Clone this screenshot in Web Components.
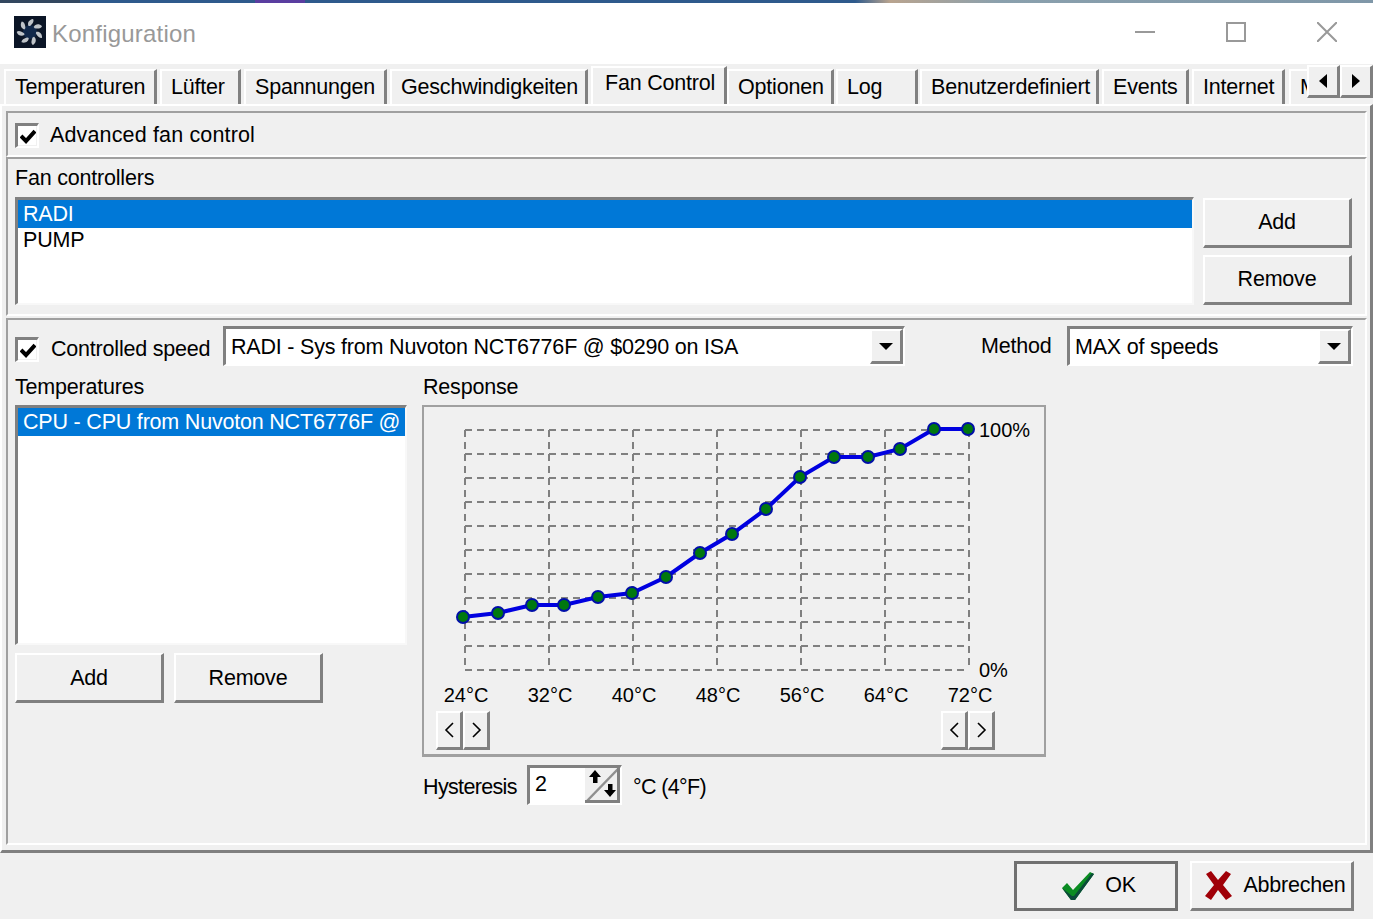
<!DOCTYPE html>
<html lang="de">
<head>
<meta charset="utf-8">
<title>Konfiguration</title>
<style>
  html, body { margin: 0; height: 100%; overflow: hidden; background: #f0f0f0; }
  body { font: 21.5px "Liberation Sans", Arial, sans-serif; letter-spacing: -.2px; color: #000; }
</style>
</head>
<body>
<app-window>
  <title-bar slot="title">Konfiguration</title-bar>
  <tab-strip slot="tabs"></tab-strip>
  <tab-sheet slot="sheet">
    <group-panel style="height:46px; --pad:10px 0 0 7px">
      <win-check style="letter-spacing:.15px">Advanced fan control</win-check>
    </group-panel>
    <group-panel style="height:159px; --pad:5px 0 0 7px">
      <fan-controllers></fan-controllers>
    </group-panel>
    <group-panel style="height:527px; margin-top:2px; --pad:6px 0 0 7px">
      <speed-config></speed-config>
    </group-panel>
  </tab-sheet>
  <dialog-footer slot="footer"></dialog-footer>
</app-window>

<script>
const BASE = `
  :host { box-sizing: border-box; }
  * { box-sizing: border-box; }
`;

class AppWindow extends HTMLElement {
  constructor() {
    super();
    this.attachShadow({ mode: "open" }).innerHTML = `
      <style>
        ${BASE}
        :host { display: flex; flex-direction: column; width: 1373px; height: 919px; background: #f0f0f0; }
        .desktop {
          height: 3px; flex: none;
          background: linear-gradient(90deg, #33475f 0, #33475f 80px, #2e5a8c 80px, #2e5a8c 255px, #5a3ea0 255px, #5a3ea0 305px, #2e5a8c 305px, #2e5a8c 855px, #b9a48f 890px, #8aa0ad 1000px, #7f97a8 1373px);
        }
      </style>
      <div class="desktop"></div>
      <slot name="title"></slot>
      <slot name="tabs"></slot>
      <slot name="sheet"></slot>
      <slot name="footer"></slot>
    `;
  }
}

class TitleBar extends HTMLElement {
  constructor() {
    super();
    const blades = [0, 51, 103, 154, 206, 257, 309].map(a =>
      `<path transform="rotate(${a} 16 16)" d="M14.5 10 C13 7 15 3.5 19 3 C20.5 5 18.5 8 16 10 Z" fill="#bfc4c9"/>`).join("");
    this.attachShadow({ mode: "open" }).innerHTML = `
      <style>
        ${BASE}
        :host { display: flex; align-items: center; flex: none; height: 61px; background: #fff; padding: 0 0 4px 14px; }
        .icon { width: 32px; height: 32px; flex: none; }
        .text { margin-left: 6px; color: #999; font-size: 24px; letter-spacing: .2px; padding-top: 5px; }
        .controls { margin-left: auto; display: flex; align-items: center; padding-right: 36px; }
        .controls svg { display: block; width: 20px; height: 20px; fill: none; stroke: #999; stroke-width: 2; }
        .controls svg + svg { margin-left: 71px; }
      </style>
      <svg class="icon" viewBox="0 0 32 32"><rect width="32" height="32" fill="#0b1526"/><circle cx="16" cy="16" r="7" fill="#11284a"/>${blades}</svg>
      <span class="text"><slot></slot></span>
      <div class="controls">
        <svg viewBox="0 0 20 20"><path d="M0 10H20"/></svg>
        <svg viewBox="0 0 20 20"><rect x="1" y="1" width="18" height="18"/></svg>
        <svg viewBox="0 0 20 20"><path d="M0 0L20 20M20 0L0 20"/></svg>
      </div>
    `;
  }
}

class TabStrip extends HTMLElement {
  constructor() {
    super();
    const tabs = [
      ["Temperaturen", 153, 4], ["Lüfter", 81, 3], ["Spannungen", 143, 3],
      ["Geschwindigkeiten", 198, 3], ["Fan Control", 136, 3, true], ["Optionen", 107, 0],
      ["Log", 82, 2], ["Benutzerdefiniert", 179, 2], ["Events", 87, 3],
      ["Internet", 93, 3], ["Mail", 90, 4]
    ];
    const html = tabs.map(([name, w, gap, active]) =>
      `<div class="tab${active ? " active" : ""}" style="width:${w}px;margin-left:${gap}px">${name}</div>`).join("");
    this.attachShadow({ mode: "open" }).innerHTML = `
      <style>
        ${BASE}
        :host { display: block; position: relative; flex: none; height: 40px; overflow: hidden; background: #f0f0f0; }
        .row { display: flex; align-items: flex-start; padding-top: 5px; width: 1500px; }
        .tab {
          flex: none; height: 35px; padding: 0 0 2px 9px; line-height: 32px; white-space: nowrap; overflow: hidden;
          border-right: 3px solid #808080; border-top: 2px solid #fff; border-left: 2px solid #fff;
        }
        .tab.active { height: 40px; margin-top: -3px; padding-left: 12px; line-height: 31px; background: #f0f0f0; }
        .nav { position: absolute; top: 1px; left: 1307px; display: flex; background: #f0f0f0; }
        .nav div {
          width: 33px; height: 33px; display: flex; align-items: center; justify-content: center;
          border: 2px solid #fff; border-right: 3px solid #808080; border-bottom: 3px solid #808080; background: #f0f0f0;
        }
        .nav svg { width: 10px; height: 14px; }
      </style>
      <div class="row">${html}</div>
      <div class="nav">
        <div><svg viewBox="0 0 10 14"><path d="M9 0V14L1 7Z"/></svg></div>
        <div><svg viewBox="0 0 10 14"><path d="M1 0V14L9 7Z"/></svg></div>
      </div>
    `;
  }
}

class TabSheet extends HTMLElement {
  constructor() {
    super();
    this.attachShadow({ mode: "open" }).innerHTML = `
      <style>
        ${BASE}
        :host {
          display: flex; flex-direction: column; flex: none; height: 749px; padding: 5px 3px 0 4px;
          border-top: 2px solid #fff; border-left: 2px solid #fff;
          border-right: 3px solid #808080; border-bottom: 3px solid #808080;
        }
      </style>
      <slot></slot>
    `;
  }
}

class GroupPanel extends HTMLElement {
  constructor() {
    super();
    this.attachShadow({ mode: "open" }).innerHTML = `
      <style>
        ${BASE}
        :host {
          display: block; flex: none; padding: var(--pad, 0);
          border-top: 2px solid #a0a0a0; border-left: 2px solid #a0a0a0;
          border-right: 2px solid #fff; border-bottom: 2px solid #fff;
        }
      </style>
      <slot></slot>
    `;
  }
}

class WinCheck extends HTMLElement {
  constructor() {
    super();
    this.attachShadow({ mode: "open" }).innerHTML = `
      <style>
        ${BASE}
        :host { display: flex; align-items: center; gap: var(--gap, 11px); height: 25px; white-space: nowrap; }
        .box {
          width: 24px; height: 25px; flex: none; background: #fff; display: flex; align-items: center; justify-content: center;
          border: 3px solid #808080; border-right: 2px solid #fff; border-bottom: 2px solid #fff;
          box-shadow: inset -1px -1px 0 #f0f0f0;
        }
        svg { width: 16px; height: 15px; }
      </style>
      <div class="box"><svg viewBox="0 0 16 15"><path d="M1 7L6 12L15 2" fill="none" stroke="#000" stroke-width="4"/></svg></div>
      <span><slot></slot></span>
    `;
  }
}

class WinButton extends HTMLElement {
  constructor() {
    super();
    this.attachShadow({ mode: "open" }).innerHTML = `
      <style>
        ${BASE}
        :host {
          display: flex; align-items: center; justify-content: center; flex: none;
          width: var(--w, 149px); height: var(--h, 50px); background: #f0f0f0; white-space: nowrap;
          border: 2px solid #fff; border-right: 3px solid #808080; border-bottom: 3px solid #808080;
        }
      </style>
      <slot></slot>
    `;
  }
}

class WinList extends HTMLElement {
  constructor() {
    super();
    const items = (this.getAttribute("items") || "").split("|");
    const html = items.map((t, i) => `<div class="row${i === 0 ? " sel" : ""}">${t}</div>`).join("");
    this.attachShadow({ mode: "open" }).innerHTML = `
      <style>
        ${BASE}
        :host {
          display: block; background: #fff; overflow: hidden;
          border: 3px solid #808080; border-right: 2px solid #f8f8f8; border-bottom: 2px solid #f8f8f8;
        }
        .row { height: 26px; line-height: 25px; padding-left: 5px; white-space: nowrap; overflow: hidden; }
        .sel { height: 28px; background: #0078d7; color: #fff; line-height: 28px; }
      </style>
      ${html}
    `;
  }
}

class WinCombo extends HTMLElement {
  constructor() {
    super();
    this.attachShadow({ mode: "open" }).innerHTML = `
      <style>
        ${BASE}
        :host {
          display: flex; align-items: center; height: 40px; background: #fff; padding-left: 5px; white-space: nowrap; overflow: hidden;
          border: 3px solid #808080; border-right: 2px solid #fff; border-bottom: 2px solid #fff;
        }
        .text { flex: 1; padding-top: 2px; overflow: hidden; }
        .drop {
          width: 33px; height: 35px; flex: none; display: flex; align-items: center; justify-content: center; background: #f0f0f0;
          border: 2px solid #fff; border-right: 3px solid #808080; border-bottom: 3px solid #808080;
        }
        svg { width: 14px; height: 7px; }
      </style>
      <span class="text"><slot></slot></span>
      <div class="drop"><svg viewBox="0 0 14 7"><path d="M0 0H14L7 7Z"/></svg></div>
    `;
  }
}

class FanControllers extends HTMLElement {
  constructor() {
    super();
    this.attachShadow({ mode: "open" }).innerHTML = `
      <style>
        ${BASE}
        :host { display: block; }
        .label { height: 33px; line-height: 28px; }
        .body { display: flex; gap: 9px; }
        win-list { width: 1179px; height: 108px; }
        .btns { display: flex; flex-direction: column; gap: 7px; padding-top: 1px; }
      </style>
      <div class="label">Fan controllers</div>
      <div class="body">
        <win-list items="RADI|PUMP"></win-list>
        <div class="btns"><win-button>Add</win-button><win-button>Remove</win-button></div>
      </div>
    `;
  }
}

class FanChart extends HTMLElement {
  constructor() {
    super();
    const pts = [[463,617],[498,613],[532,605],[564,605],[598,597],[632,593],[666,577],[700,553],[732,534],[766,509],[800,477],[834,457],[868,457],[900,449],[934,429],[968,429]];
    let grid = "";
    for (let y = 430; y <= 670; y += 24) grid += `<path d="M465 ${y}H969"/>`;
    for (let x = 465; x <= 969; x += 84) grid += `<path d="M${x} 430V670"/>`;
    const labels = ["24", "32", "40", "48", "56", "64", "72"].map((t, i) =>
      `<text x="${466 + i * 84}" y="702" text-anchor="middle">${t}°C</text>`).join("");
    const marks = pts.map(([x, y]) =>
      `<circle cx="${x}" cy="${y}" r="7" fill="#000fa8"/><circle cx="${x}" cy="${y}" r="5" fill="#00780f"/>`).join("");
    this.attachShadow({ mode: "open" }).innerHTML = `
      <style>
        ${BASE}
        :host {
          display: block; width: 624px; height: 352px; background: #f0f0f0;
          border: 2px solid #a0a0a0; border-bottom: 3px solid #a0a0a0;
        }
        svg { display: block; width: 620px; height: 298px; }
        text { font: 20px "Liberation Sans", Arial, sans-serif; letter-spacing: 0; fill: #000; }
        .grid path { fill: none; stroke: #808080; stroke-width: 2; stroke-dasharray: 7 5; }
        .row { display: flex; justify-content: space-between; padding: 6px 49px 0 12px; }
        .pair { display: flex; }
        win-button { --w: 27px; --h: 39px; }
        win-button svg { width: 11px; height: 18px; }
      </style>
      <svg viewBox="424 407 620 298">
        <g class="grid">${grid}</g>
        <polyline points="${pts.map(p => p.join(",")).join(" ")}" fill="none" stroke="#0000e0" stroke-width="4"/>
        ${marks}
        <text x="979" y="437">100%</text>
        <text x="979" y="677">0%</text>
        ${labels}
      </svg>
      <div class="row">
        ${[0, 1].map(() => `<div class="pair">
          <win-button><svg viewBox="0 0 11 18"><path d="M9 2L2 9L9 16" fill="none" stroke="#000" stroke-width="1.6"/></svg></win-button>
          <win-button><svg viewBox="0 0 11 18"><path d="M2 2L9 9L2 16" fill="none" stroke="#000" stroke-width="1.6"/></svg></win-button>
        </div>`).join("")}
      </div>
    `;
  }
}

class SpinEdit extends HTMLElement {
  constructor() {
    super();
    this.attachShadow({ mode: "open" }).innerHTML = `
      <style>
        ${BASE}
        :host {
          display: flex; align-items: center; width: 95px; height: 40px; background: #fff; padding-left: 5px;
          border: 3px solid #808080; border-right: 2px solid #fff; border-bottom: 2px solid #fff;
        }
        .val { flex: 1; padding-bottom: 2px; }
        svg { display: block; width: 35px; height: 35px; flex: none; }
      </style>
      <span class="val"><slot></slot></span>
      <svg viewBox="0 0 35 35">
        <rect width="35" height="35" fill="#f0f0f0"/>
        <path d="M1 34L33 1" stroke="#909090" stroke-width="2.5" fill="none"/>
        <path d="M0 32H35V35H0Z M32 0H35V35H32Z" fill="#808080"/>
        <path d="M10 2L16 9H12.5V15H8V9H4Z"/>
        <path d="M23 16H27.5V22H31L25 29L19 22H23Z"/>
      </svg>
    `;
  }
}

class SpeedConfig extends HTMLElement {
  constructor() {
    super();
    this.attachShadow({ mode: "open" }).innerHTML = `
      <style>
        ${BASE}
        :host { display: block; }
        .top { display: flex; align-items: flex-start; height: 40px; }
        win-check { --gap: 12px; margin-top: 11px; width: 208px; flex: none; }
        .sys { width: 682px; flex: none; }
        .method { margin-left: 76px; width: 72px; flex: none; padding-top: 4px; line-height: 33px; }
        .max { width: 286px; flex: none; margin-left: 14px; }
        .main { display: flex; margin-top: 5px; gap: 15px; }
        .left { width: 392px; }
        .head { height: 34px; line-height: 32px; }
        .right .head, .hyst { padding-left: 1px; }
        .left win-list { height: 240px; }
        .btns { display: flex; gap: 10px; margin-top: 8px; }
        .btns win-button { padding-top: 2px; }
        .hyst { display: flex; align-items: center; gap: 8px; margin-top: 8px; }
        .hyst .name { width: 96px; letter-spacing: -.65px; padding-top: 4px; white-space: nowrap; }
        .hyst .unit { margin-left: 3px; letter-spacing: -.65px; padding-top: 4px; }
      </style>
      <div class="top">
        <win-check>Controlled speed</win-check>
        <win-combo class="sys">RADI - Sys from Nuvoton NCT6776F @ $0290 on ISA</win-combo>
        <span class="method">Method</span>
        <win-combo class="max">MAX of speeds</win-combo>
      </div>
      <div class="main">
        <div class="left">
          <div class="head">Temperatures</div>
          <win-list items="CPU - CPU from Nuvoton NCT6776F @"></win-list>
          <div class="btns"><win-button>Add</win-button><win-button>Remove</win-button></div>
        </div>
        <div class="right">
          <div class="head">Response</div>
          <fan-chart></fan-chart>
          <div class="hyst"><span class="name">Hysteresis</span><spin-edit>2</spin-edit><span class="unit">°C (4°F)</span></div>
        </div>
      </div>
    `;
  }
}

class DialogFooter extends HTMLElement {
  constructor() {
    super();
    this.attachShadow({ mode: "open" }).innerHTML = `
      <style>
        ${BASE}
        :host { display: flex; justify-content: flex-end; gap: 12px; padding: 8px 19px 0 0; }
        win-button { --w: 164px; --h: 50px; gap: 11px; }
        .ok { outline: 3px solid #707070; outline-offset: -3px; padding-left: 6px; }
        .cancel { padding-left: 8px; }
        svg { display: block; flex: none; }
      </style>
      <win-button class="ok">
        <svg width="33" height="30" viewBox="0 0 33 30">
          <path d="M1 17L6 12L12 19L29 1L33 3L14 29H10Z" fill="#0a8c22"/>
          <path d="M1 17L10 29H14L33 3L31 2L13 25H11Z" fill="#0b4a3a"/>
        </svg>
        OK
      </win-button>
      <win-button class="cancel">
        <svg width="27" height="29" viewBox="0 0 27 29">
          <path d="M1 3L6 0L13 9L21 0L26 3L18 14L27 25L21 29L13 19L6 29L0 25L9 14Z" fill="#a00008"/>
        </svg>
        Abbrechen
      </win-button>
    `;
  }
}

customElements.define("win-button", WinButton);
customElements.define("win-check", WinCheck);
customElements.define("win-list", WinList);
customElements.define("win-combo", WinCombo);
customElements.define("spin-edit", SpinEdit);
customElements.define("fan-chart", FanChart);
customElements.define("title-bar", TitleBar);
customElements.define("tab-strip", TabStrip);
customElements.define("tab-sheet", TabSheet);
customElements.define("group-panel", GroupPanel);
customElements.define("fan-controllers", FanControllers);
customElements.define("speed-config", SpeedConfig);
customElements.define("dialog-footer", DialogFooter);
customElements.define("app-window", AppWindow);
</script>
</body>
</html>
